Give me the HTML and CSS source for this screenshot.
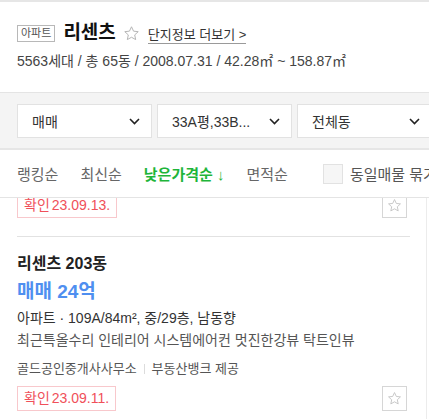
FILE: index.html
```html
<!DOCTYPE html>
<html lang="ko">
<head>
    <meta charset="UTF-8">
    <meta name="viewport" content="width=device-width, initial-scale=1.0">
    <title>리센츠 매물</title>
    <link rel="stylesheet" href="styles.css">
</head>
<body>
    <div class="page">
        <header class="complex">
            <div class="complex-title">
                <span class="badge">아파트</span>
                <h1>리센츠</h1>
                <button type="button" class="fav-btn">
                    <svg width="17" height="17" viewBox="0 0 24 24"><path d="M12 2.5l2.9 6.2 6.6.7-5 4.6 1.4 6.6L12 17.3l-5.9 3.3 1.4-6.6-5-4.6 6.6-.7z" fill="none" stroke="#b4b4b4" stroke-width="1.4" stroke-linejoin="round"/></svg>
                </button>
                <a href="#" class="more">단지정보 더보기 &gt;</a>
            </div>
            <p class="complex-info">5563세대 / 총 65동 / 2008.07.31 / 42.28㎡ ~ 158.87㎡</p>
        </header>

        <div class="filters">
            <div class="select">
                <span>매매</span>
                <svg class="chevron" width="11" height="7" viewBox="0 0 11 7"><path d="M1 1l4.5 4.5L10 1" fill="none" stroke="#222" stroke-width="1.6"/></svg>
            </div>
            <div class="select">
                <span>33A평,33B...</span>
                <svg class="chevron" width="11" height="7" viewBox="0 0 11 7"><path d="M1 1l4.5 4.5L10 1" fill="none" stroke="#222" stroke-width="1.6"/></svg>
            </div>
            <div class="select">
                <span>전체동</span>
                <svg class="chevron" width="11" height="7" viewBox="0 0 11 7"><path d="M1 1l4.5 4.5L10 1" fill="none" stroke="#222" stroke-width="1.6"/></svg>
            </div>
        </div>

        <div class="sort">
            <a href="#" class="sort-item">랭킹순</a>
            <span class="sep"></span>
            <a href="#" class="sort-item">최신순</a>
            <span class="sep"></span>
            <a href="#" class="sort-item active">낮은가격순 ↓</a>
            <span class="sep"></span>
            <a href="#" class="sort-item">면적순</a>
            <label class="group-check">
                <span class="box"></span>
                동일매물 묶기
            </label>
        </div>

        <div class="list">
            <div class="list-inner">
                <div class="item">
                    <div class="item-foot">
                        <span class="confirm"><span class="confirm-label">확인</span>23.09.13.</span>
                        <button type="button" class="save-btn">
                            <svg width="15" height="15" viewBox="0 0 24 24"><path d="M12 2.5l2.9 6.2 6.6.7-5 4.6 1.4 6.6L12 17.3l-5.9 3.3 1.4-6.6-5-4.6 6.6-.7z" fill="none" stroke="#c4c4c4" stroke-width="1.5" stroke-linejoin="round"/></svg>
                        </button>
                    </div>
                </div>
                <div class="item">
                    <div class="item-name">리센츠 203동</div>
                    <div class="item-price">매매 24억</div>
                    <div class="item-spec">아파트 · 109A/84m², 중/29층, 남동향</div>
                    <div class="item-desc">최근특올수리 인테리어 시스템에어컨 멋진한강뷰 탁트인뷰</div>
                    <div class="item-agent">
                        <span>골드공인중개사사무소</span>
                        <span class="sep small"></span>
                        <span>부동산뱅크 제공</span>
                    </div>
                    <div class="item-foot">
                        <span class="confirm"><span class="confirm-label">확인</span>23.09.11.</span>
                        <button type="button" class="save-btn">
                            <svg width="15" height="15" viewBox="0 0 24 24"><path d="M12 2.5l2.9 6.2 6.6.7-5 4.6 1.4 6.6L12 17.3l-5.9 3.3 1.4-6.6-5-4.6 6.6-.7z" fill="none" stroke="#c4c4c4" stroke-width="1.5" stroke-linejoin="round"/></svg>
                        </button>
                    </div>
                </div>
            </div>
        </div>
    </div>
</body>
</html>
```

FILE: styles.css
```css
body {
    margin: 0;
    padding: 0;
    background-color: #fff;
    font-family: 'Liberation Sans', 'Noto Sans CJK KR', sans-serif;
    color: #333;
    overflow: hidden;
}
.page {
    width: 429px;
    height: 420px;
    overflow: hidden;
    border-top: 2px solid #e6e6e6;
    box-sizing: border-box;
}
.complex {
    padding: 18px 17px 0;
}
.complex-title {
    display: flex;
    align-items: center;
    height: 26px;
}
.badge {
    display: inline-block;
    border: 1px solid #b8b8b8;
    color: #555;
    font-size: 11px;
    line-height: 15px;
    padding: 0 3px;
}
h1 {
    margin: 0 0 0 8px;
    font-size: 19px;
    font-weight: bold;
    color: #111;
    line-height: 26px;
}
.fav-btn {
    border: none;
    background: none;
    padding: 0;
    margin: 0 0 0 7px;
    display: flex;
}
.more {
    margin-left: 8px;
    font-size: 13px;
    color: #333;
    text-decoration: none;
    border-bottom: 1px solid #9a9a9a;
    line-height: 17px;
    margin-top: 3px;
}
.complex-info {
    margin: 5px 0 0;
    font-size: 14px;
    line-height: 20px;
    color: #444;
}
.filters {
    margin-top: 21px;
    background-color: #f4f4f4;
    border-top: 1px solid #e4e4e4;
    border-bottom: 2px solid #e6e6e6;
    padding: 11px 0 10px 17px;
    display: flex;
    gap: 5px;
    overflow: hidden;
}
.select {
    flex: 0 0 135px;
    box-sizing: border-box;
    height: 34px;
    background-color: #fff;
    border: 1px solid #e2e2e2;
    display: flex;
    align-items: center;
    justify-content: space-between;
    padding: 0 11px 0 14px;
    font-size: 14px;
    color: #333;
}
.sort {
    height: 48px;
    box-sizing: border-box;
    border-bottom: 1px solid #e4e4e4;
    padding: 0 17px;
    display: flex;
    align-items: center;
    white-space: nowrap;
    overflow: hidden;
}
.sort-item {
    font-size: 15px;
    color: #666;
    text-decoration: none;
}
.sort-item.active {
    color: #1eb53a;
    font-weight: bold;
}
.sep {
    display: inline-block;
    width: 1px;
    height: 11px;
    background-color: #dcdcdc;
    margin: 0 11px;
}
.group-check {
    margin-left: 35px;
    display: flex;
    align-items: center;
    font-size: 15px;
    color: #555;
}
.group-check .box {
    width: 18px;
    height: 18px;
    border: 1px solid #e2e2e2;
    background-color: #f6f6f6;
    margin-right: 7px;
}
.list {
    height: 221px;
    overflow: hidden;
    width: 426px;
    border-right: 1px solid #ececec;
}
.list-inner {
    margin-top: -13px;
}
.item {
    margin: 0 16px 0 17px;
    padding: 0 0 18px;
    border-bottom: 1px solid #e2e2e2;
}
.item + .item {
    padding-top: 16px;
}
.item-name {
    font-size: 16px;
    font-weight: bold;
    line-height: 22px;
    color: #222;
}
.item-price {
    margin-top: 3px;
    font-size: 19px;
    font-weight: bold;
    line-height: 28px;
    color: #4f8ff0;
}
.item-spec {
    margin-top: 1px;
    font-size: 14px;
    line-height: 22px;
    color: #333;
}
.item-desc {
    font-size: 14px;
    line-height: 22px;
    color: #555;
}
.item-agent {
    margin-top: 9px;
    display: flex;
    align-items: center;
    font-size: 13px;
    line-height: 18px;
    color: #555;
}
.sep.small {
    height: 10px;
    margin: 0 7px;
}
.item-foot {
    margin-top: 8px;
    display: flex;
    justify-content: space-between;
    align-items: center;
    padding-right: 3px;
}
.confirm {
    display: inline-block;
    box-sizing: border-box;
    height: 25px;
    line-height: 23px;
    padding: 0 6px;
    border: 1px solid #f8c8cc;
    color: #f0505a;
    font-size: 14px;
}
.confirm-label {
    margin-right: 2px;
}
.save-btn {
    width: 25px;
    height: 25px;
    box-sizing: border-box;
    border: 1px solid #d6d6d6;
    background-color: #fff;
    padding: 0;
    display: flex;
    align-items: center;
    justify-content: center;
}
```
